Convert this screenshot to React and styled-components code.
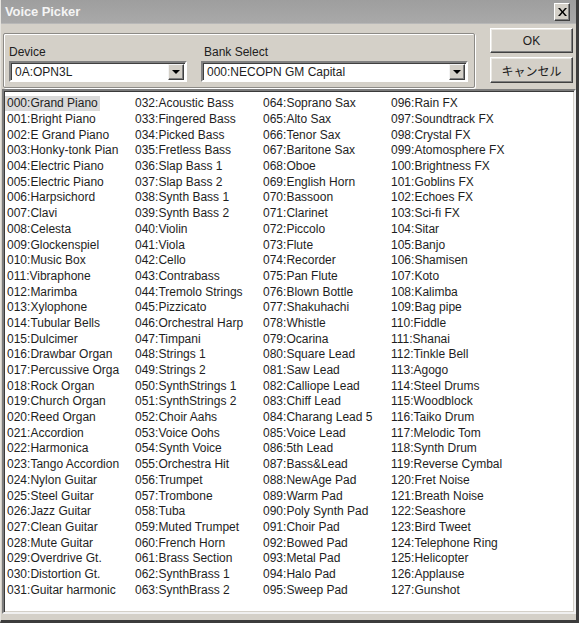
import React from 'react';
import styled, { createGlobalStyle } from 'styled-components';

// names come from the bank file, cut at 15 chars like the original
const NAMES = [
    'Grand Piano', 'Bright Piano', 'E Grand Piano', 'Honky-tonk Piano', 'Electric Piano', 'Electric Piano',
    'Harpsichord', 'Clavi', 'Celesta', 'Glockenspiel', 'Music Box', 'Vibraphone', 'Marimba', 'Xylophone',
    'Tubular Bells', 'Dulcimer', 'Drawbar Organ', 'Percussive Organ', 'Rock Organ', 'Church Organ',
    'Reed Organ', 'Accordion', 'Harmonica', 'Tango Accordion', 'Nylon Guitar', 'Steel Guitar',
    'Jazz Guitar', 'Clean Guitar', 'Mute Guitar', 'Overdrive Gt.', 'Distortion Gt.', 'Guitar harmonic',
    'Acoustic Bass', 'Fingered Bass', 'Picked Bass', 'Fretless Bass', 'Slap Bass 1', 'Slap Bass 2',
    'Synth Bass 1', 'Synth Bass 2', 'Violin', 'Viola', 'Cello', 'Contrabass', 'Tremolo Strings',
    'Pizzicato', 'Orchestral Harp', 'Timpani', 'Strings 1', 'Strings 2', 'SynthStrings 1',
    'SynthStrings 2', 'Choir Aahs', 'Voice Oohs', 'Synth Voice', 'Orchestra Hit', 'Trumpet', 'Trombone',
    'Tuba', 'Muted Trumpet', 'French Horn', 'Brass Section', 'SynthBrass 1', 'SynthBrass 2',
    'Soprano Sax', 'Alto Sax', 'Tenor Sax', 'Baritone Sax', 'Oboe', 'English Horn', 'Bassoon',
    'Clarinet', 'Piccolo', 'Flute', 'Recorder', 'Pan Flute', 'Blown Bottle', 'Shakuhachi', 'Whistle',
    'Ocarina', 'Square Lead', 'Saw Lead', 'Calliope Lead', 'Chiff Lead', 'Charang Lead 5', 'Voice Lead',
    '5th Lead', 'Bass&Lead', 'NewAge Pad', 'Warm Pad', 'Poly Synth Pad', 'Choir Pad', 'Bowed Pad',
    'Metal Pad', 'Halo Pad', 'Sweep Pad',
    'Rain FX', 'Soundtrack FX', 'Crystal FX', 'Atomosphere FX', 'Brightness FX', 'Goblins FX',
    'Echoes FX', 'Sci-fi FX', 'Sitar', 'Banjo', 'Shamisen', 'Koto', 'Kalimba', 'Bag pipe', 'Fiddle',
    'Shanai', 'Tinkle Bell', 'Agogo', 'Steel Drums', 'Woodblock', 'Taiko Drum', 'Melodic Tom',
    'Synth Drum', 'Reverse Cymbal', 'Fret Noise', 'Breath Noise', 'Seashore', 'Bird Tweet',
    'Telephone Ring', 'Helicopter', 'Applause', 'Gunshot',
];

const GlobalStyle = createGlobalStyle`
  html, body {
    margin: 0;
    padding: 0;
    background: #d4d0c8;
  }
  * {
    box-sizing: border-box;
  }
`;

const pad = (n) => String(n).padStart(3, '0');

const VoicePicker = () => {
    return (
        <Window>
            <GlobalStyle />
            <TitleBar>
                <Title>Voice Picker</Title>
                <CloseButton>
                    <svg width="9" height="8" viewBox="0 0 9 8">
                        <path d="M0 0h2l2.5 3 2.5-3h2L5.5 4 9 8H7L4.5 5 2 8H0l3.5-4z" fill="#000" />
                    </svg>
                </CloseButton>
            </TitleBar>

            <TopRow>
                <GroupBox>
                    <Field>
                        <Label>Device</Label>
                        <Combo width={178}>
                            <ComboText>0A:OPN3L</ComboText>
                            <DropButton><Arrow /></DropButton>
                        </Combo>
                    </Field>
                    <Field>
                        <Label indent>Bank Select</Label>
                        <Combo width={267}>
                            <ComboText>000:NECOPN GM Capital</ComboText>
                            <DropButton><Arrow /></DropButton>
                        </Combo>
                    </Field>
                </GroupBox>
                <Buttons>
                    <Button>OK</Button>
                    <Button tall>キャンセル</Button>
                </Buttons>
            </TopRow>

            <ListBox>
                <VoiceGrid>
                    {NAMES.map((name, i) => (
                        <Cell key={i}>
                            <Item selected={i === 0}>{pad(i)}:{name.slice(0, 15)}</Item>
                        </Cell>
                    ))}
                </VoiceGrid>
            </ListBox>
        </Window>
    );
};

const Window = styled.div`
  width: 579px;
  height: 623px;
  display: flex;
  flex-direction: column;
  background: #d4d0c8;
  border-right: 3px solid #3c3c3c;
  border-bottom: 3px solid #3c3c3c;
  border-left: 1px solid #e6e4df;
  font-family: "Liberation Sans", Arial, sans-serif;
  font-size: 12px;
  color: #1e1e1e;
`;

const TitleBar = styled.div`
  height: 24px;
  flex: none;
  display: flex;
  align-items: center;
  justify-content: space-between;
  padding: 0 6px 0 4px;
  background: linear-gradient(#9e9e9e, #a9a9a9);
  border-bottom: 1px solid #b8b8b8;
`;

const Title = styled.span`
  color: #f4f4f4;
  font-weight: 700;
  font-size: 13px;
  letter-spacing: -0.1px;
`;

const CloseButton = styled.div`
  width: 16px;
  height: 18px;
  display: flex;
  align-items: center;
  justify-content: center;
  background: #d4d0c8;
  border: 1px solid;
  border-color: #ffffff #404040 #404040 #ffffff;
  box-shadow: inset -1px -1px 0 #808080;
`;

const TopRow = styled.div`
  display: flex;
  align-items: flex-start;
  padding: 4px 4px 0 2px;
  gap: 15px;
`;

const GroupBox = styled.div`
  margin-top: 5px;
  width: 473px;
  height: 55px;
  display: flex;
  align-items: flex-end;
  gap: 14px;
  padding: 0 6px 5px 5px;
  border: 1px solid #8c8a86;
  box-shadow: inset 1px 1px 0 #ffffff, 1px 1px 0 #ffffff;
  border-radius: 2px;
`;

const Field = styled.div`
  display: flex;
  flex-direction: column;
  gap: 2px;
`;

const Label = styled.div`
  line-height: 14px;
  padding-left: ${(p) => (p.indent ? '3px' : '0')};
  color: #202020;
`;

const Combo = styled.div`
  width: ${(p) => p.width}px;
  height: 21px;
  display: flex;
  align-items: center;
  background: #ffffff;
  border: 2px solid;
  border-color: #808080 #ffffff #ffffff #808080;
  box-shadow: inset 1px 1px 0 #404040;
  padding: 1px 1px 1px 2px;
`;

const ComboText = styled.span`
  flex: 1;
  padding-left: 2px;
  white-space: nowrap;
  overflow: hidden;
`;

const DropButton = styled.div`
  width: 16px;
  height: 16px;
  flex: none;
  display: flex;
  align-items: center;
  justify-content: center;
  background: #d4d0c8;
  border: 1px solid;
  border-color: #f4f4f4 #404040 #404040 #f4f4f4;
  box-shadow: inset -1px -1px 0 #808080;
`;

const Arrow = styled.div`
  width: 0;
  height: 0;
  border-left: 4px solid transparent;
  border-right: 4px solid transparent;
  border-top: 4px solid #000;
  margin-top: 1px;
`;

const Buttons = styled.div`
  display: flex;
  flex-direction: column;
  gap: 4px;
`;

const Button = styled.div`
  width: 83px;
  height: ${(p) => (p.tall ? '26px' : '25px')};
  display: flex;
  align-items: center;
  justify-content: center;
  background: #d4d0c8;
  border: 1px solid;
  border-color: #ffffff #404040 #404040 #ffffff;
  box-shadow: inset -1px -1px 0 #808080, inset 1px 1px 0 #ebe9e4;
  font-family: "Liberation Sans", "Noto Sans CJK JP", sans-serif;
  font-size: 12px;
  color: #202020;
`;

const ListBox = styled.div`
  flex: 1;
  margin: 1px 0 6px 1px;
  background: #ffffff;
  border: 2px solid;
  border-color: #7c7c7c #f0f0f0 #f0f0f0 #7c7c7c;
  box-shadow: inset 1px 1px 0 #3a3a3a, inset -1px -1px 0 #d4d0c8;
  padding: 5px 0 0 1px;
  overflow: hidden;
`;

const VoiceGrid = styled.div`
  display: grid;
  grid-auto-flow: column;
  grid-template-rows: repeat(32, 15.7px);
  grid-template-columns: repeat(4, 128px);
`;

const Cell = styled.div`
  overflow: hidden;
  white-space: nowrap;
  display: flex;
  align-items: center;
`;

const Item = styled.span`
  padding: 0 2px;
  line-height: 15px;
  background: ${(p) => (p.selected ? '#d9d9d9' : 'transparent')};
`;

export default VoicePicker;
